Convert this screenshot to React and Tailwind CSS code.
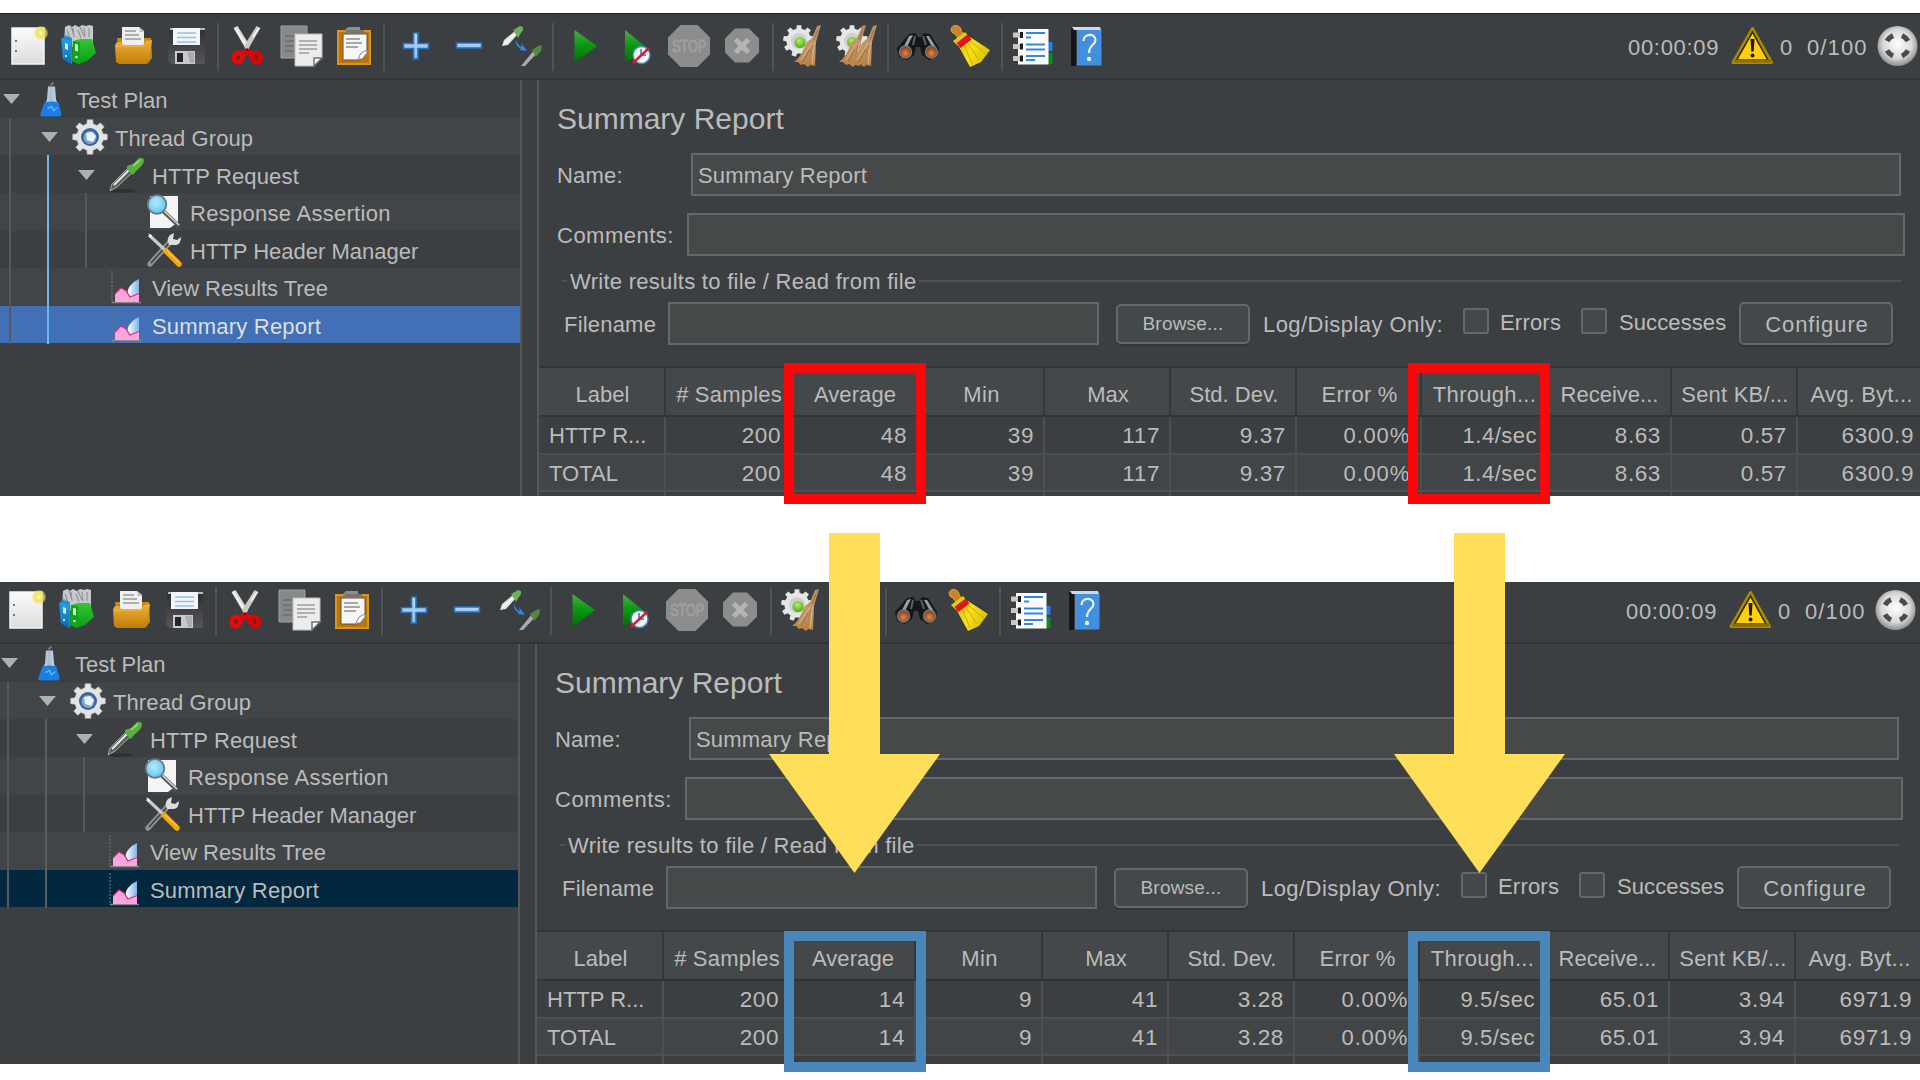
import React from "react";

/* Shared gradients used by the toolbar and tree icons. */
function Gradients() {
  const lin = (id, stops, dir = {}) => (
    <linearGradient id={id} x1="0" y1="0" x2={dir.x2 ?? "0"} y2={dir.y2 ?? "1"}>
      {stops.map(([o, c]) => (
        <stop key={o} offset={o} stopColor={c} />
      ))}
    </linearGradient>
  );
  return (
    <svg width="0" height="0" className="absolute" aria-hidden="true">
      <defs>
        {lin("paper", [[0, "#fbfbfb"], [1, "#dcdcdc"]])}
        {lin("gold", [[0, "#eeb03a"], [1, "#c27c08"]])}
        {lin("green", [[0, "#4fa84a"], [0.45, "#0a9a10"], [1, "#04690a"]])}
        {lin("binder", [[0, "#35c535"], [1, "#0a9c12"]])}
        {lin("blueBinder", [[0, "#2aa3e0"], [1, "#0768b8"]])}
        {lin("floppy", [[0, "#2e2e33"], [1, "#55555c"]])}
        {lin("help", [[0, "#4690dc"], [1, "#3f8fe0"]])}
        {lin("plus", [[0, "#b9d8f5"], [1, "#8fbdec"]])}
        {lin("straw", [[0, "#b08c66"], [0.5, "#c39769"], [1, "#b98145"]])}
        {lin("yellow", [[0, "#d8b800"], [0.5, "#f7e11c"], [1, "#dcc000"]], { x2: "1", y2: "0.4" })}
        {lin("flask", [[0, "#dfe6ee"], [0.5, "#a9bdd2"], [1, "#dfe6ee"]], { x2: "1", y2: "0" })}
        {lin("area", [[0, "#ffffff"], [1, "#7fb2ea"]], { x2: "1", y2: "0" })}
        <radialGradient id="ball" cx="0.5" cy="0.45" r="0.55">
          <stop offset="0" stopColor="#ffffff" />
          <stop offset="0.65" stopColor="#d9d9d9" />
          <stop offset="1" stopColor="#8c8c8c" />
        </radialGradient>
        <radialGradient id="lens" cx="0.45" cy="0.4" r="0.6">
          <stop offset="0" stopColor="#b6ecfc" />
          <stop offset="1" stopColor="#62c4ea" />
        </radialGradient>
        <radialGradient id="amber" cx="0.5" cy="0.6" r="0.6">
          <stop offset="0" stopColor="#e08a48" />
          <stop offset="1" stopColor="#7c3410" />
        </radialGradient>
        <radialGradient id="sun" cx="0.5" cy="0.5" r="0.5">
          <stop offset="0" stopColor="#fffbd0" />
          <stop offset="0.5" stopColor="#efe358" />
          <stop offset="1" stopColor="#efe358" stopOpacity="0.35" />
        </radialGradient>
        <radialGradient id="led" cx="0.45" cy="0.35" r="0.65">
          <stop offset="0" stopColor="#b4f06a" />
          <stop offset="1" stopColor="#4fae0c" />
        </radialGradient>
      </defs>
    </svg>
  );
}

/* Toolbar cells share one drawing space: x runs along the bar, y from 14 to 78. */
function Cell({ x, w, children }) {
  return (
    <svg className="shrink-0" width={w} height="64" viewBox={`${x} 14 ${w} 64`}>
      {children}
    </svg>
  );
}

function Sep() {
  return (
    <div className="flex h-16 w-3 shrink-0 items-center justify-center pt-0.5">
      <div className="h-12 w-0.5 bg-[#515456]" />
    </div>
  );
}

const gearPath = (cx, cy, r, R, n) => {
  let d = "";
  for (let i = 0; i < n; i++) {
    const a = (i * 2 * Math.PI) / n - Math.PI / 2;
    const s = Math.PI / n;
    const pt = (rad, ang) => `${(cx + rad * Math.cos(ang)).toFixed(2)} ${(cy + rad * Math.sin(ang)).toFixed(2)}`;
    d += `${i ? "L" : "M"}${pt(r, a - s * 0.6)}L${pt(R, a - s * 0.4)}L${pt(R, a + s * 0.4)}L${pt(r, a + s * 0.6)}`;
  }
  return d + "Z";
};

function Whisk({ dx = 0 }) {
  return (
    <g transform={`translate(${dx} 0)`}>
      <path d="M817 26l4-1 -5 17 -1 24 -5-1 -2 2 -4-3 -3 1 -3-3 -4 0c6-4 9-11 12-19l6-5z" fill="url(#straw)" />
      <path d="M815 42l-6 20M812 43l-11 17M814 48l-2 16" stroke="#dcb78c" strokeWidth="1" fill="none" />
      <path d="M810 49l-7 13M813 45l-4 18M818 30l-4 10" stroke="#8f6a42" strokeWidth="0.8" fill="none" />
    </g>
  );
}

function Toolbar() {
  return (
    <div className="flex h-[66px] items-center border-b-2 border-[#323537] bg-[#3c3f41] text-[22px] leading-none text-[#bbbbbb]">
      <Cell x={0} w={54}>
        <path d="M12 28h32v36H12z" fill="url(#paper)" stroke="#f5f5f5" strokeWidth="1.5" />
        <path d="M15 41h2M15 51h2" stroke="#777" strokeWidth="2" />
        <circle cx="41" cy="33" r="7" fill="url(#sun)" />
      </Cell>
      <Cell x={54} w={52}>
        <path d="M65 27l4-2 3 2 3-2 4 2 3-2 4 1 3-1 4 1v17l-12 6-17-4z" fill="#c7c9cb" />
        <path d="M67 30l3 8M73 28l1 9M78 30l3 8M84 28l1 9M89 28v9M65 35l4 2M71 26l3 10M80 27l4 9" stroke="#8f9396" strokeWidth="1.1" />
        <path d="M61 39l4-3 7 2v26l-9-5z" fill="#1f8fd4" />
        <path d="M63 39l8 2v23l-7-4z" fill="url(#blueBinder)" />
        <path d="M65 43l3 1v6l-3-1z" fill="#d7ecfa" />
        <path d="M73 41l7-2 12 0 4 14-9 8-9 3-6-3z" fill="url(#binder)" />
        <path d="M73 41l7 1v22l-8-3z" fill="#10a51a" />
        <path d="M75 44l3 .5v7l-3-1z" fill="#d9f7d9" />
        <circle cx="76.500" cy="57" r="1.300" fill="#c9f3c9" />
        <circle cx="66" cy="56" r="1.200" fill="#bfe2f8" />
      </Cell>
      <Cell x={106} w={54}>
        <path d="M117 38h34l1 20-4 5h-28z" fill="#c98a14" />
        <path d="M122 27l17 0 5 4v16h-22z" fill="#efefef" />
        <path d="M125 31h11M125 35h14M125 39h16" stroke="#9a9a9a" strokeWidth="1.500" />
        <path d="M139 27l1 5 4 0z" fill="#bdbdbd" />
        <path d="M115 45l2-3h4l2 3h20l3-4 6-1-3 22-2 2h-28l-3-2z" fill="url(#gold)" />
        <path d="M116 46h28" stroke="#f3bd50" strokeWidth="1" />
      </Cell>
      <Cell x={160} w={52}>
        <path d="M169 29l36-1v36h-33l-4-3z" fill="url(#floppy)" />
        <path d="M170 28h35v2h-35z" fill="#b9b9b9" />
        <path d="M173 28h27v17h-27z" fill="#f2f6fa" />
        <path d="M177 33h19M177 37.500h19M177 42h19" stroke="#9cc0e4" strokeWidth="1.500" />
        <path d="M175 51h20v13h-20z" fill="#c9c9c9" />
        <path d="M177 53h6v9h-6z" fill="#26262a" />
        <path d="M187 52h7v11h-4z" fill="#adadad" />
      </Cell>
      <Sep />
      <Cell x={224} w={48}>
        <path d="M233.500 28l4-2 12.500 20-3 5z" fill="#dedede" />
        <path d="M260.500 28l-4-2-12.500 20 3 5z" fill="#c9c9c9" />
        <path d="M235 28l10 16M259 28l-6 9" stroke="#fafafa" strokeWidth="1.400" />
        <ellipse cx="238" cy="57.500" rx="4" ry="4.800" transform="rotate(25 238 57.500)" fill="#5a2a2a" stroke="#ec0808" strokeWidth="4.800" />
        <ellipse cx="256.500" cy="57.500" rx="4" ry="4.800" transform="rotate(-25 256.500 57.500)" fill="#5a2a2a" stroke="#d90606" strokeWidth="4.800" />
        <path d="M240 52l7-4 7 4-4 4h-6z" fill="#dc0808" />
        <circle cx="247" cy="50" r="1.200" fill="#7a0000" />
      </Cell>
      <Cell x={272} w={58}>
        <path d="M281 26h26v32h-26z" fill="#86898a" stroke="#a0a0a0" strokeWidth="1" />
        <path d="M285 36h9M285 41h9M285 46h9M285 51h9" stroke="#6b6e70" strokeWidth="1.500" />
        <path d="M295 34h27v24l-8 8h-19z" fill="#ececec" stroke="#bdbdbd" strokeWidth="1" />
        <path d="M299 41h18M299 45h18M299 49h18M299 53h10" stroke="#9c9c9c" strokeWidth="1.500" />
        <path d="M322 58h-8v8z" fill="#fff" stroke="#707070" strokeWidth="1.500" />
      </Cell>
      <Cell x={330} w={48}>
        <path d="M338 31h32v33h-32z" fill="#b9760f" stroke="#dc9420" strokeWidth="2" />
        <path d="M343 34h24v19l-7 7h-17z" fill="#f6f6f6" stroke="#6b5130" strokeWidth="1" />
        <path d="M346 39h14M346 43h16M346 47h12" stroke="#8f8f8f" strokeWidth="1.400" />
        <path d="M367 50l-6 3-3 6h4l5-6z" fill="#fff" stroke="#8a8a8a" strokeWidth="1" />
        <path d="M348 27h12v6h-15v-3z" fill="#8d8f8c" />
        <path d="M347 30h17v4h-19z" fill="#74776f" />
      </Cell>
      <Sep />
      <Cell x={390} w={52}>
        <path d="M413.500 33h4.500v10.500h10.500v5h-10.500v10.500h-4.500v-10.500h-10v-5h10z" fill="url(#plus)" stroke="#2870c0" strokeWidth="1.600" />
      </Cell>
      <Cell x={442} w={50}>
        <path d="M456.500 43h25v5h-25z" fill="url(#plus)" stroke="#2870c0" strokeWidth="1.600" />
      </Cell>
      <Cell x={492} w={55}>
        <path d="M502 46l2-6 11-9 3 3-10 11z" fill="#dfe5de" />
        <path d="M504 44l12-11" stroke="#fff" strokeWidth="1.200" />
        <path d="M513 30l2-1 5-3 3 1v3l-4 6-1 2z" fill="#6fb058" />
        <path d="M521 66l14-17 3 3-13 14z" fill="#a9aeaa" />
        <path d="M532 50l6-4 4-1-1 6-5 6z" fill="#4f8a3e" />
        <path d="M516 40q2 6 6 7l-1-4 6 8-8-1 2-1q-6-3-5-9z" fill="#2f87ec" />
      </Cell>
      <Sep />
      <Cell x={559} w={52}>
        <path d="M574.500 30l22.500 16-22.500 17z" fill="url(#green)" />
      </Cell>
      <Cell x={611} w={50}>
        <path d="M625 30l22 18-22 15z" fill="url(#green)" />
        <circle cx="641.500" cy="55" r="8.500" fill="#eef5fb" stroke="#4f86b4" strokeWidth="1.500" />
        <path d="M641 49v6h5" stroke="#3a77b0" strokeWidth="1.500" fill="none" />
        <path d="M633 63l16-15" stroke="#d8202c" strokeWidth="2.400" />
      </Cell>
      <Cell x={661} w={56}>
        <path d="M680.500 25h17l12.500 12.500v17l-12.500 12.500h-17l-12.500-12.500v-17z" fill="#8b8c8c" />
        <text x="689.200" y="52" textAnchor="middle" textLength="34" lengthAdjust="spacingAndGlyphs" fontFamily="Liberation Sans, sans-serif" fontSize="16.500" fill="#8b8c8c" stroke="#a0a1a1" strokeWidth="1.100">STOP</text>
      </Cell>
      <Cell x={717} w={50}>
        <path d="M735 28.500h14l10 10v14l-10 10h-14l-10-10v-14z" fill="#8c8d8d" />
        <path d="M735.500 39.500l13 13M748.500 39.500l-13 13" stroke="#b4b4b4" strokeWidth="5" />
      </Cell>
      <Sep />
      <Cell x={779} w={49}>
        <path d={gearPath(799, 41, 12.500, 16, 9)} fill="#e6e6e6" />
        <circle cx="799" cy="41" r="8" fill="#cfcfcf" />
        <circle cx="800" cy="42.500" r="5.500" fill="url(#led)" />
        <Whisk />
      </Cell>
      <Cell x={828} w={54}>
        <path d={gearPath(852, 41, 12.500, 16, 9)} fill="#e6e6e6" />
        <circle cx="852" cy="41" r="8" fill="#cfcfcf" />
        <circle cx="852" cy="42" r="5" fill="url(#led)" />
        <Whisk dx={45} />
        <Whisk dx={56} />
      </Cell>
      <Sep />
      <Cell x={894} w={50}>
        <path d="M909 34l6-1 3 4h3l3-4 6 1 9 14-2 9-8 3-7-5-2-8h-4l-2 8-7 5-8-3-2-9z" fill="#16171a" />
        <path d="M909 36l4-1-6 12-4 1zM929 36l-3 0 6 11 5 2z" fill="#9a9da0" />
        <path d="M915 36l-2 9M923 36l3 9" stroke="#5d6063" strokeWidth="2" />
        <circle cx="905.500" cy="52" r="6" fill="url(#amber)" stroke="#777" strokeWidth="1.400" />
        <circle cx="931.500" cy="52" r="6" fill="url(#amber)" stroke="#777" strokeWidth="1.400" />
      </Cell>
      <Cell x={944} w={52}>
        <path d="M951 29q2-5 7-3 4 2 3 5l5 5-6 5-5-7q-4-1-4-5z" fill="#c98424" stroke="#e0a44c" strokeWidth="1" />
        <path d="M953 41l12-9 4 5-11 9z" fill="#e5cb10" />
        <path d="M958 45l12-8 20 13-9 12-11 5z" fill="url(#yellow)" />
        <path d="M964 44l8 20M967 42l12 18M970 41l16 13" stroke="#cbb000" strokeWidth="1" />
        <path d="M956.500 43l11-8.500 4 5-11 8.500z" fill="#df1414" />
      </Cell>
      <Sep />
      <Cell x={1008} w={52}>
        <path d="M1048 42h4.500v9h-4.500z" fill="#2a7be0" />
        <path d="M1048 53h4.500v11h-4.500z" fill="#0c8f12" />
        <path d="M1018 29h30.500v35.500h-30.500z" fill="#fbfbfb" />
        <path d="M1013 32.500h8v5h-8zM1013 44h8v5h-8zM1013 56h8v5h-8z" fill="#c9c9c9" />
        <path d="M1020 32h3v6h-3zM1020 43.500h3v6h-3zM1020 55.500h3v6h-3z" fill="#1d1d1d" />
        <path d="M1026 33h19M1026 37.500h5M1026 44.500h19M1026 49.500h19M1026 56h19M1026 60h9" stroke="#3587e6" strokeWidth="2" />
      </Cell>
      <Cell x={1060} w={50}>
        <path d="M1071 28l5-1v39h-5z" fill="#141518" />
        <path d="M1072 27h28l1 3h-27z" fill="#c8dcee" />
        <path d="M1077 30h24.500v35.500h-24.500z" fill="url(#help)" />
        <path d="M1083.500 41c0-8 12-8 12-1 0 5-6.500 5-6.500 13" stroke="#e6f1fb" strokeWidth="2.200" fill="none" />
        <circle cx="1089" cy="59" r="2.200" fill="#e6f1fb" />
      </Cell>
      <div className="w-[518px] shrink-0" />
      <span className="w-[103px] shrink-0 pt-[4px] tracking-[0.7px]">00:00:09</span>
      <Cell x={1731} w={49}>
        <path d="M1752.500 28.500l19 34h-38.500z" fill="#ffcf0a" stroke="#a88c00" strokeWidth="3" strokeLinejoin="round" />
        <path d="M1752.500 32l15.500 28h-31.500z" fill="#ffd00c" stroke="#3a3000" strokeWidth="1.600" />
        <path d="M1734 61h37" stroke="#8c6c00" strokeWidth="3" />
        <path d="M1750.500 39h4l-.8 12.500h-2.400z" fill="#1c1800" />
        <circle cx="1752.500" cy="55.500" r="2" fill="#1c1800" />
      </Cell>
      <span className="w-[27px] shrink-0 pt-[4px]">0</span>
      <span className="w-[67px] shrink-0 pt-[4px] tracking-[1.1px]">0/100</span>
      <Cell x={1874} w={48}>
        <circle cx="1897.500" cy="46" r="20" fill="url(#ball)" />
        <g fill="none" stroke="#4a4b4c" strokeWidth="5">
          <path d="M1887 41q2-3.500 6-5.500" />
          <path d="M1902 35.500q4 2 6 5.500" />
          <path d="M1887 50.500q2 3.500 6 5.500" />
          <path d="M1902 56q4-2 6-5.500" />
        </g>
      </Cell>
    </div>
  );
}

function TreeIcon({ kind }) {
  const art = {
    flask: (
      <g transform="translate(0.5 1.500)">
        <path d="M14 3l3-3" stroke="#777" strokeWidth="2" />
        <path d="M11.500 4h7l1 13 5 14q0 2-2 2h-16q-2 0-2-2l6-14z" fill="url(#flask)" />
        <path d="M8 20q7-2 14 0l3 11q0 3-3 3h-16q-3 0-2-3z" fill="#1b7fe2" />
        <path d="M11 26l4-2 2 4 4-3" stroke="#5db4ff" strokeWidth="1.500" fill="none" />
      </g>
    ),
    gear: (
      <>
        <path d={gearPath(18, 18, 13.500, 17.500, 8)} fill="#e4e4e4" stroke="#bdbdbd" strokeWidth="0.600" />
        <circle cx="18" cy="18" r="9" fill="#3a659c" />
        <circle cx="18" cy="18.500" r="6.500" fill="#7fa5d2" />
        <path d="M14 14l6-1 4 4-3 6-6-2z" fill="#e9f1fa" />
      </>
    ),
    pipette: (
      <>
        <ellipse cx="13" cy="34" rx="13" ry="1.800" fill="#2d3032" />
        <path d="M1 34l2-7 17-17 5 4-17 16z" fill="#5d605f" stroke="#a7aaa7" strokeWidth="1" />
        <path d="M5 28l15-15" stroke="#e8ebe8" strokeWidth="1.800" />
        <path d="M18 9l6-2 6-6q4-1 5 2 0 5-8 11l-3 4-6-6z" fill="#5aae42" />
        <path d="M24 9l7-6" stroke="#8ed672" strokeWidth="2" />
      </>
    ),
    search: (
      <>
        <path d="M4 2h28v26l-8 6h-20z" fill="#f4f4f4" />
        <path d="M17 17l16 15" stroke="#5a5d60" strokeWidth="4" />
        <path d="M18 17l15 14" stroke="#d6d9dc" strokeWidth="1.500" />
        <circle cx="11" cy="10.500" r="9.300" fill="url(#lens)" stroke="#66798a" strokeWidth="1.800" />
      </>
    ),
    tools: (
      <>
        <path d="M3 32l20-22" stroke="#8d9192" strokeWidth="5.500" strokeLinecap="round" />
        <path d="M4 31l19-21" stroke="#3c3f41" strokeWidth="1.500" />
        <path d="M22 13q-3-6 1-10l4-2-1 6 4 1 4-3q0 7-5 8z" fill="#dcdedd" />
        <path d="M2 3l16 15" stroke="#c9cbca" strokeWidth="3.200" />
        <path d="M1 1l4 3-1 2z" fill="#fff" />
        <path d="M19 19l13 13" stroke="#f0a60c" strokeWidth="5.500" strokeLinecap="round" />
        <path d="M20 19l12 11" stroke="#ffc63c" strokeWidth="1.500" />
      </>
    ),
    chart: (
      <>
        <path d="M4 2v32" stroke="#6f7274" strokeWidth="1.200" strokeDasharray="2 1.500" />
        <path d="M4 33.500h29" stroke="#8a8486" strokeWidth="1.500" />
        <path d="M31 10v21l-6-1-4-4q-3-4 1-9 4-5 9-7z" fill="url(#area)" />
        <path d="M7 33v-8l6-6 5 3 4 6 9-4v9z" fill="#fba6dc" />
        <path d="M7 25l6-6 5 3 4 6 9-3.500" stroke="#e0307c" strokeWidth="1.200" fill="none" />
      </>
    ),
  };
  return (
    <svg className="shrink-0" width="36" height="36" viewBox="0 0 36 36">
      {art[kind]}
    </svg>
  );
}

const treeRows = [
  { label: "Test Plan", icon: "flask", indent: "pl-[3px]", iconGap: "ml-[16px]", textGap: "ml-[5px]", open: true, track: "tracking-normal" },
  { label: "Thread Group", icon: "gear", indent: "pl-[41px]", iconGap: "ml-[14px]", textGap: "ml-[7px]", open: true, track: "tracking-[0.1px]" },
  { label: "HTTP Request", icon: "pipette", indent: "pl-[78px]", iconGap: "ml-[14px]", textGap: "ml-[7px]", open: true, track: "tracking-[0.15px]" },
  { label: "Response Assertion", icon: "search", indent: "pl-[146px]", iconGap: "", textGap: "ml-[8px]", track: "tracking-[0.28px]" },
  { label: "HTTP Header Manager", icon: "tools", indent: "pl-[147px]", iconGap: "", textGap: "ml-[7px]", track: "tracking-normal" },
  { label: "View Results Tree", icon: "chart", indent: "pl-[108px]", iconGap: "", textGap: "ml-[8px]", track: "tracking-[-0.06px]" },
  { label: "Summary Report", icon: "chart", indent: "pl-[108px]", iconGap: "", textGap: "ml-[8px]", track: "tracking-[0.2px]", selected: true },
];

function Tree({ active }) {
  return (
    <div className="relative w-[520px] shrink-0">
      {treeRows.map((r, i) => {
        const bg = r.selected ? (active ? "bg-[#4170b6]" : "bg-[#01283f]") : i % 2 ? "bg-[#414547]" : "bg-[#3c3f41]";
        return (
          <div
            key={r.label}
            className={`flex h-[37.640px] items-center ${bg} ${r.indent} ${r.selected && active ? "text-[#dcdfe3]" : ""}`}
          >
            {r.open && (
              <svg className="mt-px shrink-0" width="17" height="10" viewBox="0 0 17 10">
                <path d="M0 0h17l-8.500 10z" fill="#adb0b1" />
              </svg>
            )}
            <div className={`flex pt-px ${r.iconGap}`}>
              <TreeIcon kind={r.icon} />
            </div>
            <span className={`whitespace-nowrap pt-[5px] ${r.textGap} ${r.track}`}>{r.label}</span>
          </div>
        );
      })}
      {/* Indent guides drawn over the rows */}
      <div className="absolute top-[38px] left-[9px] h-[226px] w-0.5 bg-[#55595b]" />
      <div className={`absolute top-[75px] left-[47px] h-[189px] w-0.5 ${active ? "bg-[#69b9ea]" : "bg-[#5a5e60]"}`} />
      <div className="absolute top-[113px] left-[85px] h-[75px] w-[1.500px] bg-[#55595b]" />
    </div>
  );
}

function Field({ className, children }) {
  return (
    <div className={`flex shrink-0 items-center border-2 border-[#646868] bg-[#45494a] ${className}`}>{children}</div>
  );
}

function Check() {
  return <div className="mb-[5px] size-[26px] shrink-0 rounded-[3px] border-2 border-[#646868] bg-[#43494a]" />;
}

const columns = [
  ["Label", "tracking-normal"],
  ["# Samples", "tracking-[0.2px]"],
  ["Average", "tracking-[0.1px]"],
  ["Min", "tracking-[0.4px]"],
  ["Max", "tracking-normal"],
  ["Std. Dev.", "tracking-normal"],
  ["Error %", "tracking-[0.2px]"],
  ["Through...", "tracking-[0.3px]"],
  ["Receive...", "tracking-normal"],
  ["Sent KB/...", "tracking-[0.2px]"],
  ["Avg. Byt...", "tracking-[0.2px]"],
];
const gridCols = "grid grid-cols-[127px_126px_126px_127px_126px_126px_125px_125px_125px_126px_127px]";

function ResultTable({ rows }) {
  return (
    <div className="border-t-2 border-[#323537]">
      <div className={`${gridCols} h-[49px] border-b-2 border-[#323537] bg-[#45484a]`}>
        {columns.map(([c, track]) => (
          <div key={c} className={`flex items-center justify-center border-r-2 border-[#35383a] pt-[7px] pl-[2px] whitespace-nowrap ${track}`}>
            {c}
          </div>
        ))}
      </div>
      {rows.map((row, i) => (
        <div key={row[0]} className={`${gridCols} h-[37.700px] border-b-2 border-[#4c5052] ${i % 2 ? "bg-[#414547]" : "bg-[#3c3f41]"}`}>
          {row.map((v, j) => (
            <div
              key={j}
              className={`flex items-center border-r-2 border-[#4c5052] pt-[3px] whitespace-nowrap ${
                j === 0
                  ? "pl-[10px]"
                  : v.endsWith("sec")
                    ? "justify-end pr-[8px] tracking-[0.5px]"
                    : v.endsWith("%")
                      ? "justify-end pr-[10px] tracking-[0.8px]"
                      : "justify-end pr-[9px] text-[22.500px] tracking-[0.6px]"
              }`}
            >
              {v}
            </div>
          ))}
        </div>
      ))}
      <div className={`${gridCols} h-5`}>
        {columns.map(([c]) => (
          <div key={c} className="border-r-2 border-[#4c5052]" />
        ))}
      </div>
    </div>
  );
}

function Report({ rows }) {
  return (
    <div className="w-[1386px] shrink-0 border-l-2 border-[#55585a]">
      <div className="pl-[18px]">
        <div className="mt-[19px] flex h-10 items-center text-[30px]">Summary Report</div>
        <div className="mt-[14px] flex h-[43px] items-center">
          <span className="w-[134px] shrink-0 pt-[2px] tracking-[0.2px]">Name:</span>
          <Field className="h-[43px] w-[1210px] pt-[2px] pl-[5px] tracking-[0.2px]">Summary Report</Field>
        </div>
        <div className="mt-[17px] flex h-[43px] items-center">
          <span className="w-[130px] shrink-0 pt-[3px] tracking-[0.5px]">Comments:</span>
          <Field className="h-[43px] w-[1218px]" />
        </div>
        <div className="mt-[13px] flex h-6 items-center">
          <div className="ml-[5px] h-0.5 w-[5px] bg-[#505355]" />
          <span className="ml-[3px] w-[349px] shrink-0 whitespace-nowrap pt-px tracking-[0.280px]">Write results to file / Read from file</span>
          <div className="h-0.5 w-[982px] bg-[#505355]" />
        </div>
        <div className="mt-[9px] flex h-[43px] items-center">
          <span className="ml-[7px] w-[104px] shrink-0 pt-[2px] tracking-[0.2px]">Filename</span>
          <Field className="h-[43px] w-[431px]" />
          <div className="ml-[17px] flex h-10 w-[134px] shrink-0 items-center justify-center rounded-[5px] border-2 border-[#646868] bg-[#43494a] text-[19px] tracking-[0.2px] shadow-[0_2px_1px_#34373a]">
            Browse...
          </div>
          <span className="ml-[13px] w-[200px] shrink-0 whitespace-nowrap pt-[2px] tracking-[0.45px]">Log/Display Only:</span>
          <Check />
          <span className="ml-[11px] w-[81px] shrink-0 pb-px tracking-[0.2px]">Errors</span>
          <Check />
          <span className="ml-[12px] w-[120px] shrink-0 pb-px tracking-[0.1px]">Successes</span>
          <div className="flex h-[43px] w-[154px] shrink-0 items-center justify-center rounded-[5px] border-2 border-[#646868] bg-[#43494a] pt-[2px] pl-0.5 tracking-[0.9px] shadow-[0_2px_1px_#34373a]">
            Configure
          </div>
        </div>
      </div>
      <div className="mt-[21px]">
        <ResultTable rows={rows} />
      </div>
    </div>
  );
}

function Window({ rows, active }) {
  return (
    <div className="w-[1922px] bg-[#3c3f41]">
      <Toolbar />
      <div className="flex h-[440px] overflow-hidden text-[22px] leading-none text-[#bbbbbb]">
        <Tree active={active} />
        <div className="w-[17px] shrink-0 border-l-2 border-[#55585a]" />
        <Report rows={rows} />
      </div>
    </div>
  );
}

function Arrow({ className }) {
  return (
    <svg className={`absolute top-[533px] ${className}`} width="171" height="340" viewBox="0 0 171 340">
      <path d="M60 0h51v221h60l-85.500 119L0 221h60z" fill="#ffde59" />
    </svg>
  );
}

const before = [
  ["HTTP R...", "200", "48", "39", "117", "9.37", "0.00%", "1.4/sec", "8.63", "0.57", "6300.9"],
  ["TOTAL", "200", "48", "39", "117", "9.37", "0.00%", "1.4/sec", "8.63", "0.57", "6300.9"],
];
const after = [
  ["HTTP R...", "200", "14", "9", "41", "3.28", "0.00%", "9.5/sec", "65.01", "3.94", "6971.9"],
  ["TOTAL", "200", "14", "9", "41", "3.28", "0.00%", "9.5/sec", "65.01", "3.94", "6971.9"],
];

export default function App() {
  return (
    <div className="relative h-[1080px] w-[1920px] overflow-hidden bg-white pt-[14px] font-['Liberation_Sans',Arial,sans-serif]">
      <Gradients />
      <div className="h-[482px] overflow-hidden shadow-[0_-1px_0_#1e1f20]">
        <Window rows={before} active />
      </div>
      <div className="mt-[86px] h-[481.500px] overflow-hidden">
        <div className="-mt-1 -ml-0.5">
          <Window rows={after} />
        </div>
      </div>

      {/* Callouts laid over the two windows */}
      <div className="absolute top-[363px] left-[784px] h-[141px] w-[142px] border-[10px] border-[#f80808]" />
      <div className="absolute top-[363px] left-[1408px] h-[141px] w-[142px] border-[10px] border-[#f80808]" />
      <div className="absolute top-[931px] left-[784px] h-[141px] w-[142px] border-[10px] border-[#4a86ba]" />
      <div className="absolute top-[931px] left-[1408px] h-[141px] w-[142px] border-[10px] border-[#4a86ba]" />
      <Arrow className="left-[769px]" />
      <Arrow className="left-[1394px]" />
    </div>
  );
}
